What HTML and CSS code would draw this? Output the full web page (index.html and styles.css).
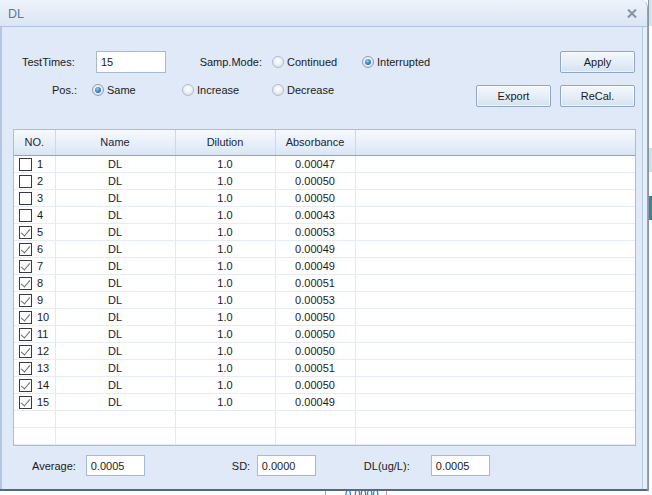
FILE: index.html
```html
<!DOCTYPE html>
<html>
<head>
<meta charset="utf-8">
<link rel="stylesheet" href="styles.css">
</head>
<body>
<div class="screen">
  <div class="main">
    <div class="dialog">
      <div class="titlebar">
        <span class="title">DL</span>
        <svg class="close" width="10" height="9" viewBox="0 0 10 9"><path d="M1 0.5 L9 8.5 M9 0.5 L1 8.5" stroke="#8592a2" stroke-width="2" fill="none"/></svg>
      </div>
      <div class="content">
        <div class="top">
          <div class="form">
            <div class="frow">
              <span class="lbl l-test">TestTimes:</span>
              <div class="field f-test">15</div>
              <span class="lbl l-samp">Samp.Mode:</span>
              <span class="ritem w90"><i class="radio"></i>Continued</span>
              <span class="ritem"><i class="radio on"></i>Interrupted</span>
            </div>
            <div class="frow">
              <span class="lbl l-pos">Pos.:</span>
              <span class="ritem w90"><i class="radio on"></i>Same</span>
              <span class="ritem w90"><i class="radio"></i>Increase</span>
              <span class="ritem"><i class="radio"></i>Decrease</span>
            </div>
          </div>
          <div class="buttons">
            <div class="brow"><div class="btn">Apply</div></div>
            <div class="brow"><div class="btn">Export</div><div class="btn">ReCal.</div></div>
          </div>
        </div>
        <div class="grid">
          <table>
            <colgroup><col class="c1"><col class="c2"><col class="c3"><col class="c4"><col></colgroup>
            <thead>
              <tr><th>NO.</th><th>Name</th><th>Dilution</th><th>Absorbance</th><th class="last"></th></tr>
            </thead>
            <tbody>
              <tr><td class="no"><i class="cb"></i>1</td><td>DL</td><td>1.0</td><td>0.00047</td><td></td></tr>
              <tr><td class="no"><i class="cb"></i>2</td><td>DL</td><td>1.0</td><td>0.00050</td><td></td></tr>
              <tr><td class="no"><i class="cb"></i>3</td><td>DL</td><td>1.0</td><td>0.00050</td><td></td></tr>
              <tr><td class="no"><i class="cb"></i>4</td><td>DL</td><td>1.0</td><td>0.00043</td><td></td></tr>
              <tr><td class="no"><i class="cb on"></i>5</td><td>DL</td><td>1.0</td><td>0.00053</td><td></td></tr>
              <tr><td class="no"><i class="cb on"></i>6</td><td>DL</td><td>1.0</td><td>0.00049</td><td></td></tr>
              <tr><td class="no"><i class="cb on"></i>7</td><td>DL</td><td>1.0</td><td>0.00049</td><td></td></tr>
              <tr><td class="no"><i class="cb on"></i>8</td><td>DL</td><td>1.0</td><td>0.00051</td><td></td></tr>
              <tr><td class="no"><i class="cb on"></i>9</td><td>DL</td><td>1.0</td><td>0.00053</td><td></td></tr>
              <tr><td class="no"><i class="cb on"></i>10</td><td>DL</td><td>1.0</td><td>0.00050</td><td></td></tr>
              <tr><td class="no"><i class="cb on"></i>11</td><td>DL</td><td>1.0</td><td>0.00050</td><td></td></tr>
              <tr><td class="no"><i class="cb on"></i>12</td><td>DL</td><td>1.0</td><td>0.00050</td><td></td></tr>
              <tr><td class="no"><i class="cb on"></i>13</td><td>DL</td><td>1.0</td><td>0.00051</td><td></td></tr>
              <tr><td class="no"><i class="cb on"></i>14</td><td>DL</td><td>1.0</td><td>0.00050</td><td></td></tr>
              <tr><td class="no"><i class="cb on"></i>15</td><td>DL</td><td>1.0</td><td>0.00049</td><td></td></tr>
              <tr><td></td><td></td><td></td><td></td><td></td></tr>
              <tr><td></td><td></td><td></td><td></td><td></td></tr>
            </tbody>
          </table>
        </div>
        <div class="bottom">
          <span class="lbl b-avg">Average:</span>
          <div class="field f-small">0.0005</div>
          <span class="lbl b-sd">SD:</span>
          <div class="field f-small">0.0000</div>
          <span class="lbl b-dl">DL(ug/L):</span>
          <div class="field f-small">0.0005</div>
        </div>
      </div>
    </div>
    <div class="strip">
      <div class="s s1"></div>
      <div class="s s2"></div>
      <div class="s s3"></div>
      <div class="s s4"></div>
      <div class="s s5"></div>
      <div class="s s6"></div>
    </div>
  </div>
  <div class="below">
    <span class="pline p1"></span>
    <span class="btext">0.0000</span>
    <span class="pline p2"></span>
  </div>
</div>
</body>
</html>
```
FILE: styles.css
```css
* { box-sizing: border-box; }
html, body { margin: 0; padding: 0; }
body {
  width: 652px; height: 495px; overflow: hidden;
  font-family: "Liberation Sans", Arial, sans-serif;
  font-size: 11px; color: #1b1b1b;
  background: #ffffff;
}
.screen { width: 652px; height: 495px; display: flex; flex-direction: column; overflow: hidden; }
.main { display: flex; height: 491px; }
.dialog {
  width: 648px; height: 491px;
  background: #e6eef9;
  border-right: 1px solid #8fa4c0;
  border-bottom: 2px solid #56687f;
  border-top-right-radius: 8px;
  display: flex; flex-direction: column;
  overflow: hidden;
}
.titlebar {
  height: 27px; flex: none;
  background: linear-gradient(#edf3fb, #dbe6f4);
  border-bottom: 1px solid #adc3df;
  display: flex; align-items: center; justify-content: space-between;
  padding: 0 9px 0 8px;
}
.title { font-size: 12.5px; color: #66768a; padding-top: 1px; }
.close { margin-top: 1px; margin-right: 1px; }
.content {
  width: 643px; flex: 1;
  background: #dfe9f7;
  border-left: 2px solid #b3c7e1;
  border-right: 1px solid #b8cae1;
  padding: 24px 5px 0 11px;
}
.top { display: flex; justify-content: space-between; height: 56px; }
.form { padding-left: 9px; display: flex; flex-direction: column; gap: 6px; }
.frow { display: flex; align-items: center; height: 22px; }
.lbl { white-space: nowrap; }
.l-test { width: 74px; }
.field {
  height: 22px; background: #fff; border: 1px solid #a7bad3;
  padding: 3px 0 0 4px; line-height: 14px;
}
.f-test { width: 70px; }
.l-samp { width: 96px; text-align: right; margin-right: 10px; }
.ritem { display: flex; align-items: center; white-space: nowrap; }
.w90 { width: 90px; }
.l-pos { width: 70px; text-align: right; padding-right: 15px; }
.radio {
  width: 12px; height: 12px; border-radius: 50%; margin-right: 3px;
  border: 1px solid #b3bcc8;
  background: radial-gradient(circle at 50% 40%, #ffffff 0%, #eef1f5 45%, #cdd4de 100%);
  display: inline-flex; align-items: center; justify-content: center;
}
.radio.on { border-color: #8d9db2; }
.radio.on::after {
  content: ""; width: 6px; height: 6px; border-radius: 50%;
  background: radial-gradient(circle at 40% 35%, #9fd0f5 0%, #3c8ccc 45%, #1d5a94 100%);
}
.buttons { display: flex; flex-direction: column; align-items: flex-end; gap: 12px; margin-right: 2px; }
.brow { display: flex; gap: 9px; }
.btn {
  width: 75px; height: 22px; border: 1px solid #8fa6c4; border-radius: 2px;
  background: linear-gradient(#f3f7fc 0%, #e6eef8 50%, #d6e2f1 100%);
  display: flex; align-items: center; justify-content: center; color: #1b1b1b;
  box-shadow: inset 0 0 0 1px rgba(255,255,255,0.6);
}
.grid {
  margin-top: 22px; width: 623px; height: 317px;
  border: 1px solid #a8bdd6; background: #fff; overflow: hidden;
}
table { border-collapse: collapse; table-layout: fixed; width: 621px; }
col.c1 { width: 41px; }
col.c2 { width: 120px; }
col.c3 { width: 100px; }
col.c4 { width: 80px; }
th {
  height: 25px; font-weight: normal; color: #1e2633;
  background: linear-gradient(#f6f9fe 0%, #e9f0fa 50%, #d9e5f5 100%);
  border-bottom: 1px solid #7ea6db;
  border-right: 1px solid #c9d8ea;
  padding: 0; text-align: center;
}
th.last { border-right: none; }
td {
  height: 17px; padding: 0; text-align: center;
  border-bottom: 1px solid #e6ecf3;
  border-right: 1px solid #e3e9f1;
  line-height: 15px; white-space: nowrap;
  padding-top: 1px;
}
td:last-child { border-right: none; }
td.no { text-align: left; padding-left: 5px; }
.cb {
  display: inline-block; width: 13px; height: 13px; vertical-align: -3px;
  border: 1px solid #3a3a3a; background: #fff; margin-right: 5px; position: relative;
}
.cb.on::after {
  content: ""; position: absolute; left: 3px; top: 0px; width: 4px; height: 8px;
  border-right: 1.2px solid #6a6a6a; border-bottom: 1.2px solid #6a6a6a;
  transform: rotate(40deg);
}
.bottom { display: flex; align-items: center; margin-top: 9px; padding-left: 19px; height: 21px; }
.bottom .field { height: 21px; padding-top: 3px; }
.f-small { width: 59px; }
.b-avg { margin-right: 10px; }
.b-sd { margin-left: 87px; width: 25px; }
.b-dl { margin-left: 48px; width: 67px; }
.strip { width: 4px; height: 491px; background: #ffffff; display: flex; flex-direction: column; border-left: 1px solid #8897a8; }
.s { width: 100%; }
.s1 { height: 26px; background: #d3e4e6; }
.s2 { height: 122px; background: #ffffff; }
.s3 { height: 24px; background: #cfe1e0; }
.s4 { height: 24px; background: #fff; }
.s5 { height: 24px; background: #3d8789; }
.s6 { height: 200px; background: #fff; }
.below { height: 4px; display: flex; background: #fff; padding-left: 325px; overflow: hidden; }
.pline { width: 1px; height: 4px; background: #e58ab8; }
.btext { width: 60px; color: #2a3fb8; font-size: 11px; line-height: 6px; padding-left: 19px; overflow: hidden; }
```
